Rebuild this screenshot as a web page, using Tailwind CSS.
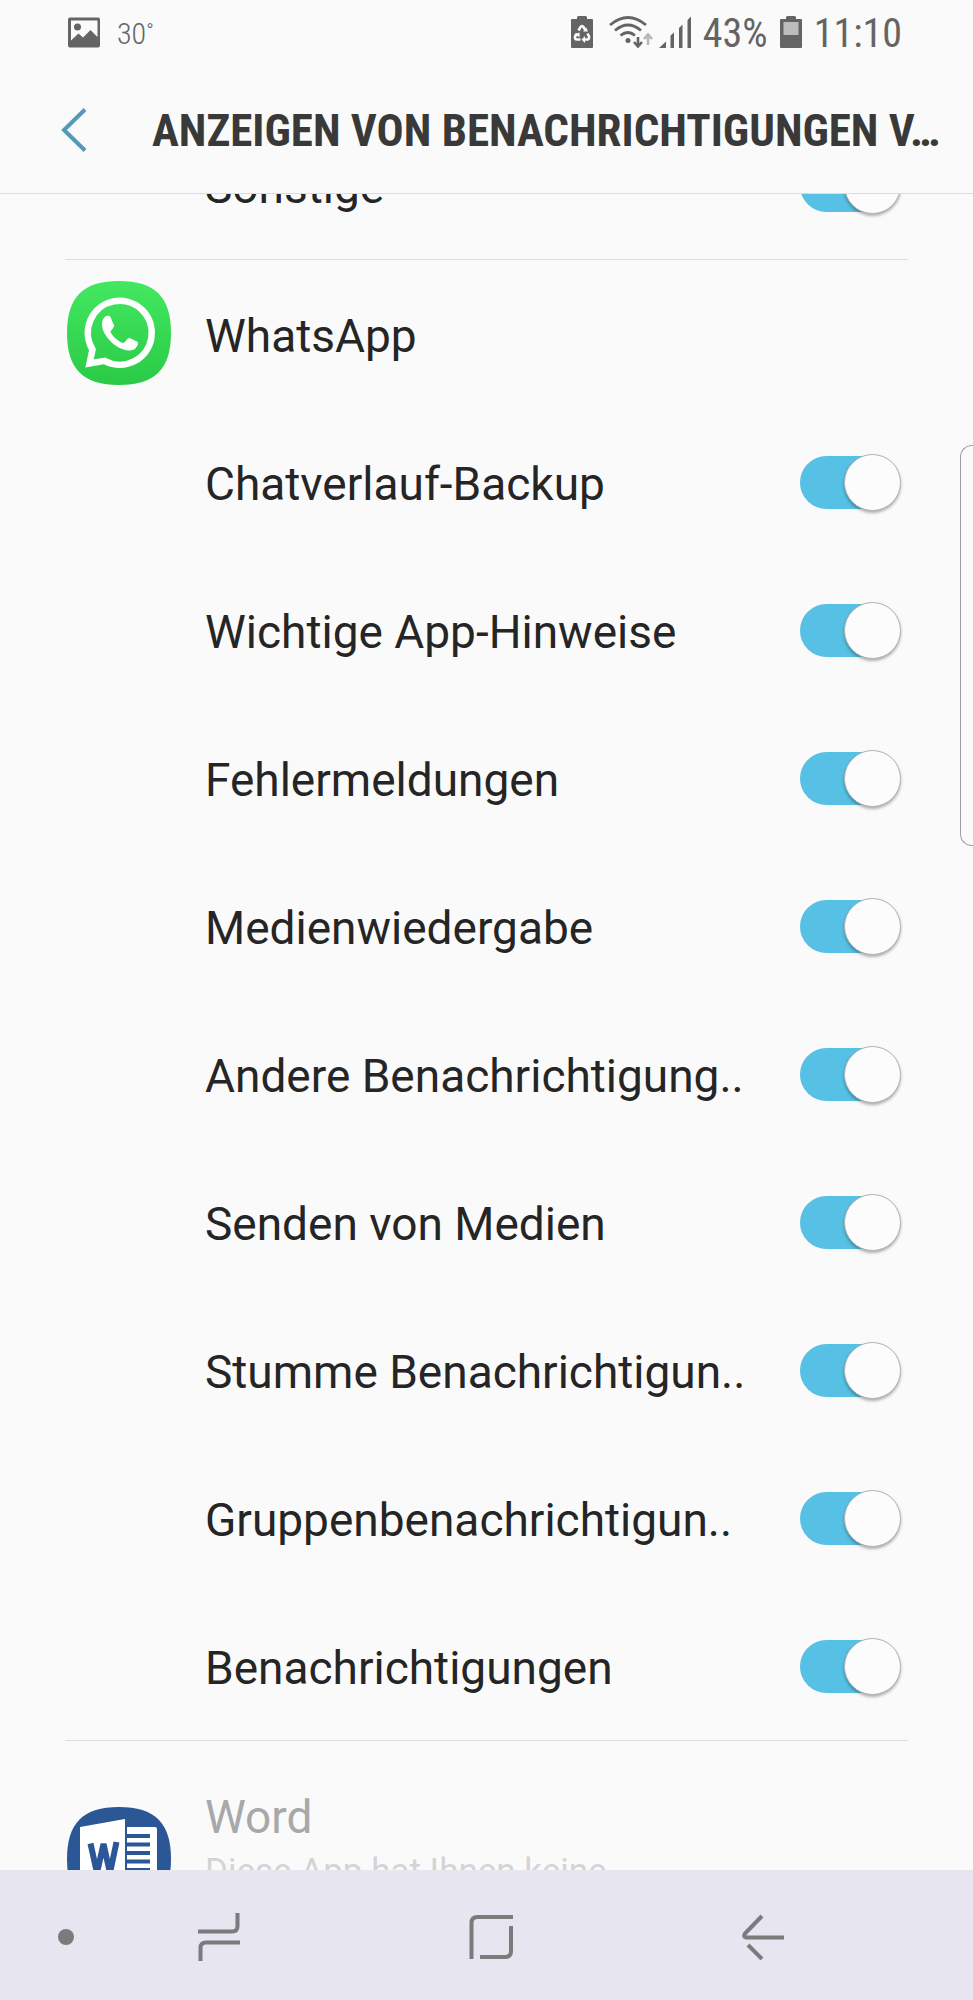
<!DOCTYPE html>
<html lang="de">
<head>
<meta charset="utf-8">
<meta name="viewport" content="width=device-width, initial-scale=1">
<title>Anzeigen von Benachrichtigungen</title>
<script src="https://cdn.jsdelivr.net/npm/@tailwindcss/browser@4"></script>
</head>
<body class="relative flex h-screen flex-col overflow-hidden bg-[#fafafa] font-[Roboto,sans-serif] text-[#252525]">

<!-- Status bar -->
<div class="flex h-16 shrink-0 items-center justify-between pl-[68px] pr-[71px] font-['Roboto_Condensed','Liberation_Sans_Narrow',Roboto,sans-serif] text-[#646464]">
  <div class="flex items-center gap-[17px]">
    <svg class="h-[31px] w-8" viewBox="0 0 32 31" aria-hidden="true">
      <path fill="#646464" fill-rule="evenodd" d="M2 0.500H30Q32 .5 32 2.500V28.500Q32 30.500 30 30.500H2Q0 30.500 0 28.500V2.500Q0 .5 2 .5ZM3 3.500V23.500L10.500 16.500L15 20.500L22.500 13L29.500 20V3.500Z"/>
      <circle cx="9.500" cy="10" r="3.500" fill="#646464"/>
    </svg>
    <span class="flex items-start pt-1 text-[30px] leading-none font-light">30<span class="text-[20px] leading-[24px]">°</span></span>
  </div>
  <div class="flex items-center">
    <svg class="mr-4 h-8 w-[22px]" viewBox="0 0 22 32" aria-hidden="true">
      <path fill="#646464" d="M6 3V1.500Q6 0 7.500 0H14.500Q16 0 16 1.500V3H21Q22 3 22 4V31Q22 32 21 32H1Q0 32 0 31V4Q0 3 1 3Z"/>
      <path fill="none" stroke="#fafafa" stroke-width="2.600" d="M7.500 14.500L9.300 11.300Q11 9 12.700 11.300L14.500 14.500M16.500 17.500L18 20.500Q18.500 23.500 16 23.500H13M9.500 23.500H6Q3.500 23.500 4 20.500L6 17.500"/>
      <path fill="#fafafa" d="M12 15.500H17L15.300 11.500ZM14 20V27L10.500 23.500ZM3 18.500L8.500 16.500L8.700 21Z"/>
    </svg>
    <svg class="mr-1.5 h-8 w-11" viewBox="0 0 44 32" aria-hidden="true">
      <g fill="none" stroke="#646464" stroke-width="2.700">
        <path d="M1 9Q19 -6 37 9"/><path d="M6 14.500Q19 3.500 32 14.500"/><path d="M11.500 19.500Q19 13.500 26 19.500"/>
      </g>
      <circle cx="19" cy="24.500" r="2.500" fill="#646464"/>
      <path fill="none" stroke="#646464" stroke-width="2.600" d="M29 21V30M25 26L29 30.500L33 26"/>
      <path fill="none" stroke="#b8b8b8" stroke-width="2.600" d="M39 29V19M35 23L39 18.500L43 23"/>
    </svg>
    <svg class="mr-3 h-8 w-8" viewBox="0 0 32 32" aria-hidden="true">
      <path fill="#646464" d="M0 32L7 25.500V32ZM11.500 19.500L15 16.500V32H11.500ZM20 12L23.500 8.500V32H20ZM28.500 4L32 .5V32H28.500Z"/>
    </svg>
    <span class="pt-1 text-[40px] leading-none">43%</span>
    <svg class="mx-3 h-8 w-[22px]" viewBox="0 0 22 32" aria-hidden="true">
      <path fill="#646464" d="M6 3V1.500Q6 0 7.500 0H14.500Q16 0 16 1.500V3H21Q22 3 22 4V31Q22 32 21 32H1Q0 32 0 31V4Q0 3 1 3Z"/>
      <path fill="#bcbcbc" d="M3.500 6H18.500V19H3.500Z"/>
    </svg>
    <span class="pt-1 text-[40px] leading-none">11:10</span>
  </div>
</div>

<!-- Title bar -->
<header class="flex h-[130px] shrink-0 items-center border-b border-[#dcdcdc] pl-[60px] pr-6">
  <button type="button" aria-label="Zurück" class="shrink-0 pt-0.5 pr-[65px]">
    <svg class="h-11 w-[27px]" viewBox="0 0 27 44" aria-hidden="true"><path fill="none" stroke="#5499b5" stroke-width="4" d="M25 1.500L4 22L25 42.500"/></svg>
  </button>
  <h1 class="whitespace-nowrap pt-1 font-['Roboto_Condensed','Liberation_Sans_Narrow',Roboto,sans-serif] text-[45px] leading-none font-bold text-[#393939]">ANZEIGEN VON BENACHRICHTIGUNGEN V…</h1>
</header>

<!-- Scrolled list -->
<main class="min-h-0 flex-1 overflow-hidden px-[65px]">
  <div id="list" class="-mt-[83px] text-[46px] leading-none">
  </div>
  <section class="flex border-t border-[#dedede] pl-0.5">
    <svg class="mt-[66px] h-26 w-26 shrink-0" viewBox="0 0 104 104" aria-hidden="true">
      <path fill="#2b5797" d="M52 0C88 0 104 16 104 52S88 104 52 104S0 88 0 52S16 0 52 0Z"/>
      <path fill="#fff" d="M13 20L58 12V92L13 84ZM60 20H88Q90 20 90 22V82Q90 84 88 84H60Z"/>
      <path stroke="#2b5797" stroke-width="4" d="M60 29H83M60 37.500H83M60 46H83M60 54.500H83M60 63H83"/>
      <path fill="none" stroke="#2b5797" stroke-width="6" stroke-linejoin="bevel" d="M23.500 36.500L30 66L36.500 37L43 66L49.500 35"/>
    </svg>
    <div class="ml-[34px] mt-[53px] whitespace-nowrap">
      <h2 class="text-[46px] leading-[46px] text-[#a8a8a8]">Word</h2>
      <p class="mt-[11px] text-[35px] leading-[42px] text-[#d4d4d4]">Diese App hat Ihnen keine</p>
    </div>
  </section>
</main>

<!-- Edge panel handle -->
<div class="absolute right-0 top-[445px] h-[401px] w-[13px] rounded-l-[12px] border border-r-0 border-[#a0a0a0]"></div>

<!-- Navigation bar -->
<nav class="flex h-[130px] shrink-0 items-stretch bg-[#e6e5f0] pl-[49px] pr-[74px]" aria-label="Systemnavigation">
  <button type="button" aria-label="Leiste ausblenden" class="flex w-[34px] items-center justify-center pt-1"><span class="size-4 rounded-full bg-[#7b7b7b]"></span></button>
  <button type="button" aria-label="Letzte Apps" class="flex flex-1 items-center justify-center pt-1">
    <svg class="h-12 w-[42px]" viewBox="0 0 42 48" fill="none" stroke="#7b7b7b" stroke-width="4" aria-hidden="true"><path d="M0 18.500H34Q39.500 18.500 39.500 13V0M42 29.500H8Q2.500 29.500 2.500 35V48"/></svg>
  </button>
  <button type="button" aria-label="Startseite" class="flex flex-1 items-center justify-center pt-1">
    <svg class="h-11 w-11" viewBox="0 0 44 44" fill="none" stroke="#7b7b7b" stroke-width="4" aria-hidden="true"><path d="M2.500 44V8Q2.500 2 8.500 2H44M42 11V36Q42 42 36 42H11"/></svg>
  </button>
  <button type="button" aria-label="Zurück" class="flex flex-1 items-center justify-center pt-1">
    <svg class="h-[46px] w-[42px]" viewBox="0 0 42 46" fill="none" stroke="#7b7b7b" stroke-width="4" aria-hidden="true"><path d="M20 2L3 19.500Q1 23 4 23.500H42M6 31L20 45"/></svg>
  </button>
</nav>

<template id="switch-row">
  <label class="flex h-[148px] items-center justify-between pl-[140px] pr-[7px]">
    <span class="whitespace-nowrap pt-1"></span>
    <span class="relative flex h-[57px] w-[101px] shrink-0 items-center justify-end">
      <input type="checkbox" role="switch" checked class="absolute inset-x-0 inset-y-0.5 appearance-none rounded-full bg-[linear-gradient(90deg,#56c0e5_80px,transparent_80px)]">
      <span class="relative size-[57px] rounded-full border border-[#b4b4b4] bg-[#fcfcfc] shadow-[0_2px_3px_rgba(0,0,0,0.3)]"></span>
    </span>
  </label>
</template>
<template id="app-row">
  <div class="flex h-[149px] items-center border-t border-[#dedede] pl-0.5">
    <svg class="mb-0.5 size-26 shrink-0" viewBox="0 0 104 104" aria-hidden="true">
      <defs><linearGradient id="green" x1="0" y1="0" x2="0" y2="1"><stop offset="0" stop-color="#43e860"/><stop offset="1" stop-color="#2aca46"/></linearGradient></defs>
      <path fill="url(#green)" d="M52 0C88 0 104 16 104 52S88 104 52 104S0 88 0 52S16 0 52 0Z"/>
      <path fill="none" stroke="#fff" stroke-width="6.500" d="M22.500 82.500L25.500 68.500A32 32 0 1 1 37.500 79.900Z"/>
      <path fill="#fff" d="M36.500 37.500C38 34.500 42 34 43.500 36L47 44.500C47.500 46.500 43.500 49.500 43.500 51C46 56 51 60 56 62C58 62 60 57 62.500 57L70 60.500C72.500 62 70 66.500 67 68.500C62 70.500 56 69 50 65.500C43 61 37.500 54 35.500 47.500C34.500 43.500 35 40 36.500 37.500Z"/>
    </svg>
    <h2 class="ml-[34px] pt-1">WhatsApp</h2>
  </div>
</template>
<script>
  const list = document.getElementById('list');
  const addSwitch = (name) => {
    const row = document.getElementById('switch-row').content.cloneNode(true);
    row.querySelector('span').textContent = name;
    list.append(row);
  };
  addSwitch('Sonstige');
  list.append(document.getElementById('app-row').content.cloneNode(true));
  ['Chatverlauf-Backup', 'Wichtige App-Hinweise', 'Fehlermeldungen', 'Medienwiedergabe', 'Andere Benachrichtigung..',
   'Senden von Medien', 'Stumme Benachrichtigun..', 'Gruppenbenachrichtigun..', 'Benachrichtigungen'].forEach(addSwitch);
</script>
</body>
</html>
